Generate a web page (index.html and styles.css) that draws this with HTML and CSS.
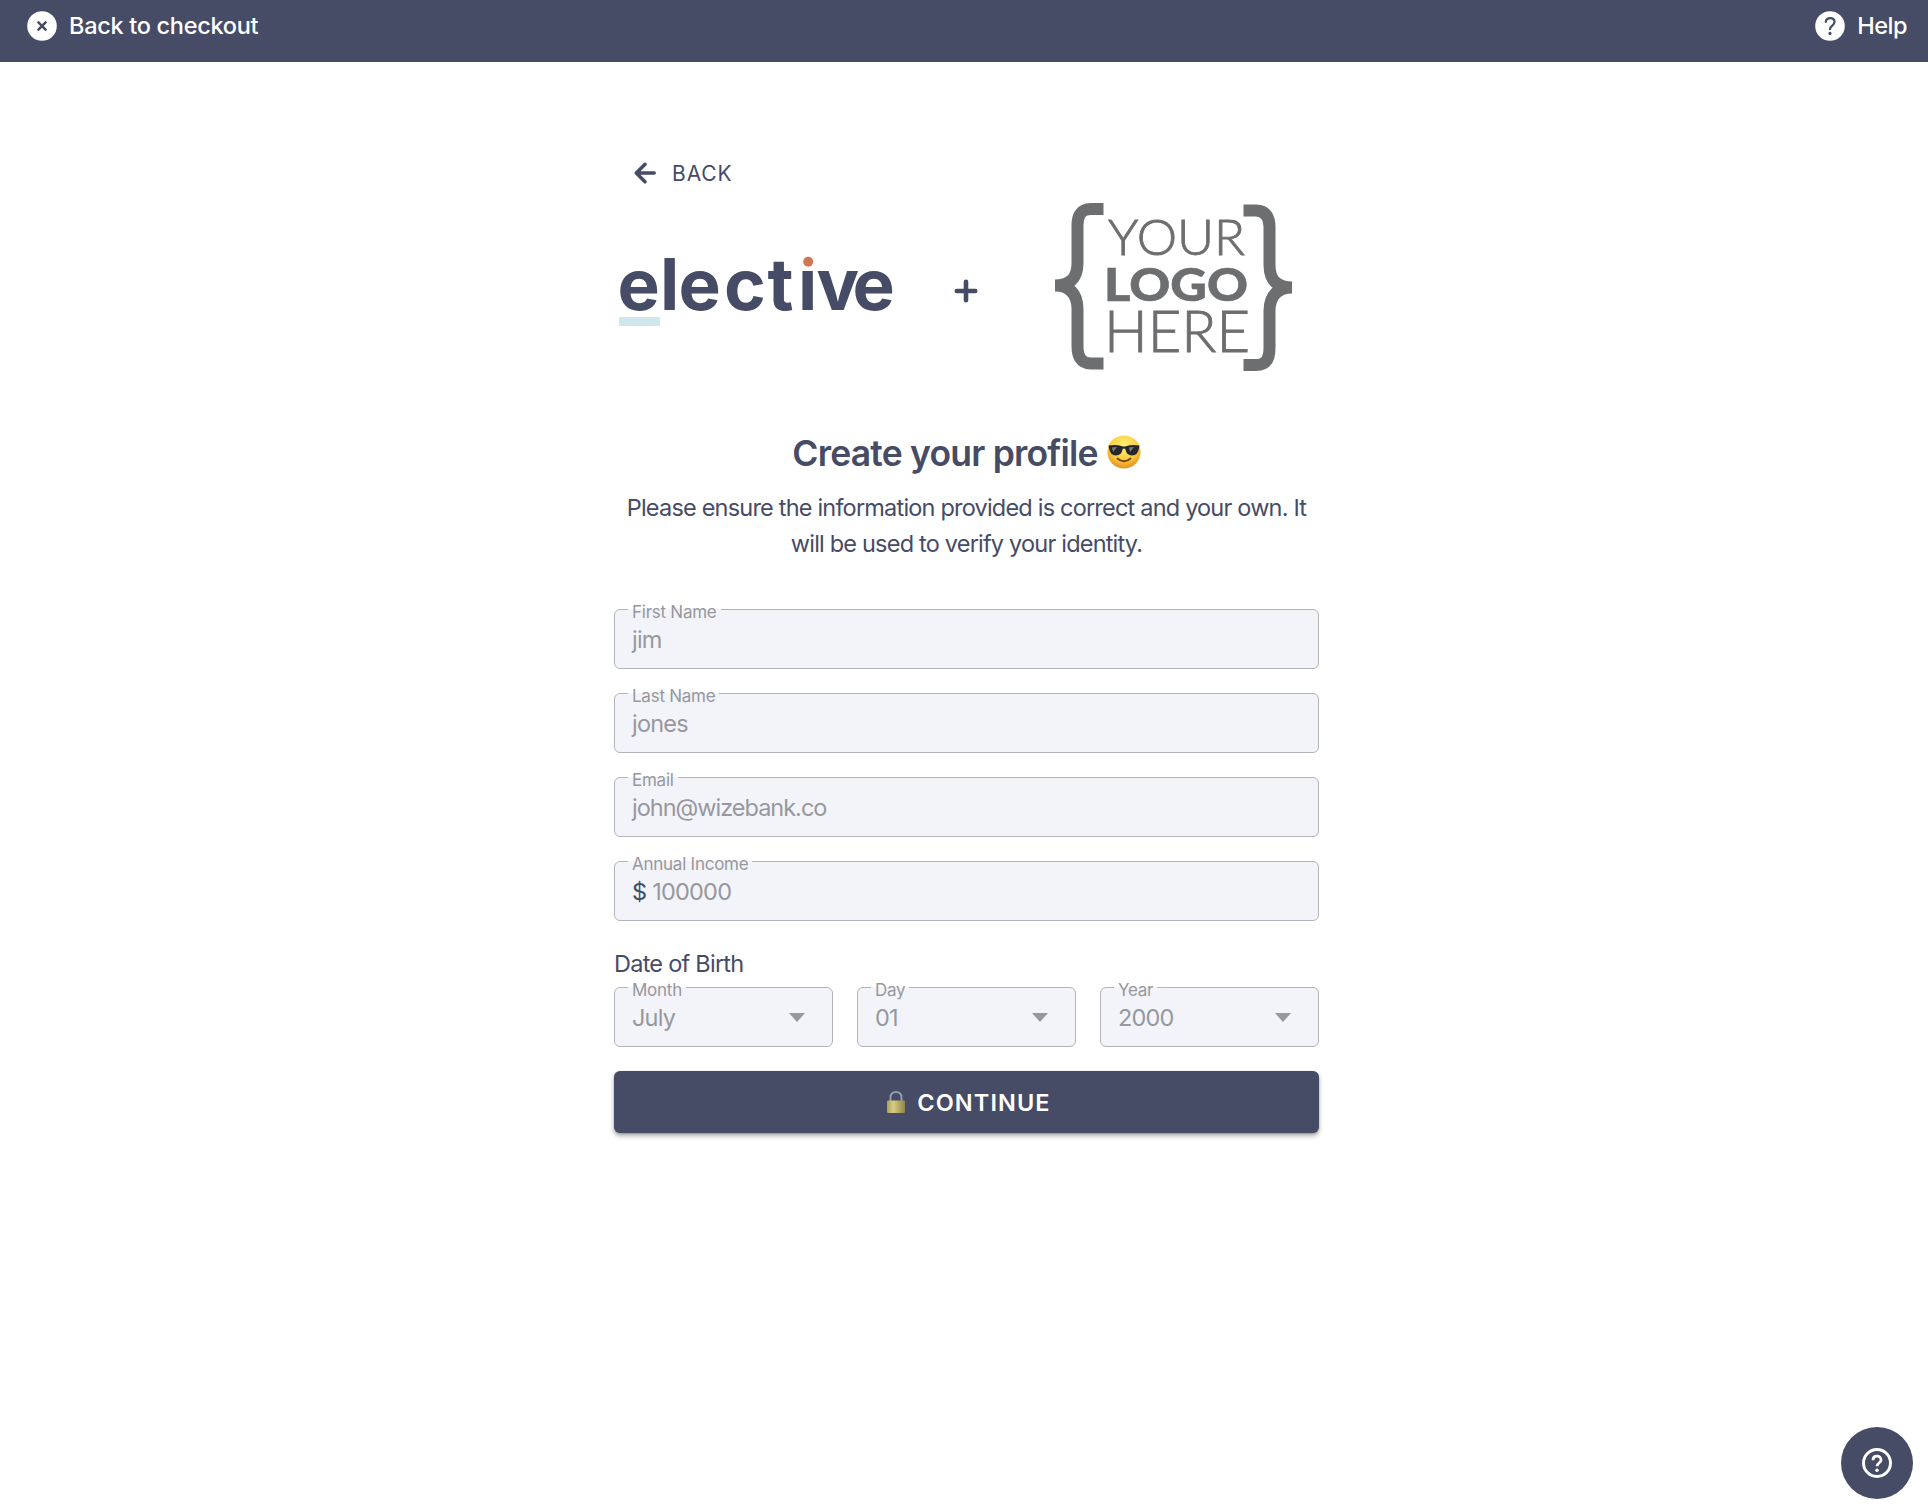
FILE: index.html
```html
<!DOCTYPE html>
<html lang="en">
<head>
<meta charset="utf-8">
<title>Create your profile</title>
<link rel="stylesheet" href="styles.css">
</head>
<body>
<header class="topbar">
  <a class="topbar-link">
    <svg width="30" height="30" viewBox="0 0 30 30"><circle cx="15" cy="15" r="14.8" fill="#fff"/><path d="M11.4 11.4l7.2 7.2M18.600 11.400l-7.200 7.200" stroke="#464b66" stroke-width="2.500" stroke-linecap="round"/></svg>
    <span class="checkout">Back to checkout</span>
  </a>
  <a class="topbar-link">
    <svg width="30" height="30" viewBox="0 0 30 30"><circle cx="15" cy="15" r="14.800" fill="#fff"/><path d="M10.800 10.800C11.100 8.400 12.800 7.100 15.100 7.100c2.500 0 4.400 1.500 4.400 3.800 0 3.600-4.500 3.700-4.500 7.300" fill="none" stroke="#464b66" stroke-width="2.200" stroke-linecap="round"/><circle cx="15" cy="22.400" r="1.600" fill="#464b66"/></svg>
    <span class="help">Help</span>
  </a>
</header>
<main class="column">
  <a class="back">
    <svg width="22" height="22" viewBox="0 0 22 22"><path d="M11 2.300L2.300 11l8.700 8.700M3 11h17.200" fill="none" stroke="#464b66" stroke-width="3.500" stroke-linecap="round" stroke-linejoin="round"/></svg>
    <span>BACK</span>
  </a>
  <div class="logos">
    <svg class="brand" width="284" height="80" viewBox="0 0 284 80">
      <text class="brand-text" y="59" x="3.500 46 64.500 110 153.500 184 202.500 238.500">elective</text>
      <rect x="186" y="0" width="16" height="18" fill="#fff"/>
      <circle cx="194.200" cy="10.800" r="5" fill="#d37550"/>
      <rect x="5" y="66" width="41" height="9" rx="1" fill="#cfe6ea"/>
    </svg>
    <svg class="plus" width="24" height="24" viewBox="0 0 24 24"><path d="M12 2.800v18.400M2.800 12h18.400" stroke="#464b66" stroke-width="4.600" stroke-linecap="round"/></svg>
    <svg class="partner" width="238" height="168" viewBox="0 0 238 168">
      <g fill="none" stroke="#6d6e70" stroke-width="12">
        <path d="M48.500 6H36C25 6 22.500 14 22.500 22V60C22.500 76 14 82.500 0 82.500C14 82.500 22.500 90 22.500 106V143C22.500 152 25 160.500 36 160.500H48.500"/>
        <path d="M188.500 7.500H201C212 7.500 214.500 16 214.500 24V62C214.500 78 223 84.500 237 84.500C223 84.500 214.500 92 214.500 108V145C214.500 154 212 162 201 162H188.500"/>
      </g>
      <text class="light" x="53" y="52" font-size="50" textLength="137" lengthAdjust="spacingAndGlyphs">YOUR</text>
      <text class="heavy" x="49" y="98" font-size="46" textLength="144" lengthAdjust="spacingAndGlyphs">LOGO</text>
      <text class="light" x="49" y="149" font-size="57" textLength="146" lengthAdjust="spacingAndGlyphs">HERE</text>
    </svg>
  </div>
  <h1><span>Create your profile</span>
    <svg width="34" height="34" viewBox="0 0 34 34">
      <defs><radialGradient id="face" cx=".5" cy=".3" r=".72"><stop offset="0" stop-color="#fff27a"/><stop offset=".6" stop-color="#fbcb3c"/><stop offset="1" stop-color="#e28c1d"/></radialGradient></defs>
      <circle cx="17" cy="17" r="16.600" fill="url(#face)"/>
      <path d="M1.500 10.600Q9 9 15 11.200Q17 12 19 11.200Q25 9 32.500 10.600L32 13Q31 20.500 25 20.500Q19.500 20.500 18.300 14Q17 13 15.700 14Q14.500 20.500 9 20.500Q3 20.500 2 13Z" fill="#25272b"/>
      <path d="M5 12.500l5-.5-4 5zM22 12.500l5-.5-4 5z" fill="#777b80"/>
      <path d="M10.500 23.500Q17 29 23.500 23.500" fill="none" stroke="#70400f" stroke-width="1.800" stroke-linecap="round"/>
    </svg>
  </h1>
  <p class="intro"><span>Please ensure the information provided is correct and your own. It</span><br><span>will be used to verify your identity.</span></p>
  <form class="form">
    <div class="field"><label>First Name</label><span>jim</span></div>
    <div class="field"><label>Last Name</label><span>jones</span></div>
    <div class="field"><label>Email</label><span class="email">john@wizebank.co</span></div>
    <div class="field"><label>Annual Income</label><span class="dollar">$</span><span>100000</span></div>
    <div class="dob-title"><span>Date of Birth</span></div>
    <div class="dob">
      <div class="field select"><label>Month</label><span>July</span><i class="caret"></i></div>
      <div class="field select"><label>Day</label><span>01</span><i class="caret"></i></div>
      <div class="field select"><label>Year</label><span>2000</span><i class="caret"></i></div>
    </div>
    <button class="continue" type="button">
      <svg width="20" height="24" viewBox="0 0 20 24">
        <defs><linearGradient id="brass"><stop offset="0" stop-color="#aaa05c"/><stop offset=".35" stop-color="#d6ce83"/><stop offset="1" stop-color="#8f8648"/></linearGradient></defs>
        <path d="M4.500 12V7.500Q4.500 2 10 2T15.500 7.500V12" fill="none" stroke="#8d9bac" stroke-width="2"/>
        <rect x="1" y="10.500" width="18" height="12.500" rx="1" fill="url(#brass)"/>
      </svg>
      <span>CONTINUE</span>
    </button>
  </form>
</main>
<a class="fab">
  <svg width="32" height="32" viewBox="0 0 32 32"><circle cx="16" cy="16" r="13.500" fill="none" stroke="#fff" stroke-width="3"/><path d="M12 13.200c0-2.500 1.700-4 4-4s4 1.500 4 3.700c0 2.900-4 3.300-4 6.300" fill="none" stroke="#fff" stroke-width="2.800"/><circle cx="16" cy="23.300" r="1.700" fill="#fff"/></svg>
</a>
</body>
</html>
```
FILE: styles.css
```css
* { box-sizing: border-box; }
body { margin: 0; min-height: 1510px; background: #fff; color: #464b66; font-family: Inter, sans-serif; font-size: 23.5px; }
svg { display: block; flex: none; }
span { white-space: nowrap; }

.topbar { height: 62px; padding: 11px 21px 0 27px; background: #464b66; color: #fff; display: flex; justify-content: space-between; align-items: flex-start; font-weight: 500; }
.topbar-link { display: flex; gap: 12px; height: 30px; line-height: 30px; }
.checkout { letter-spacing: -.3px; }
.help { letter-spacing: -.5px; }

.column { width: 705px; margin: 0 0 0 614px; }
.back { display: flex; align-items: center; gap: 16px; height: 30px; margin-top: 96px; padding-left: 20px; font-size: 21px; font-weight: 370; letter-spacing: .9px; }
.back svg { margin-top: -1px; }
.logos { display: flex; align-items: flex-start; height: 168px; margin-top: 15px; }
.brand { margin-top: 48px; overflow: visible; }
.plus { margin: 76px 0 0 56px; }
.partner { margin-left: 77px; }
.brand-text { font: 700 71px Inter, sans-serif; fill: #464b66; }
.light { font-family: Lato, sans-serif; font-weight: 300; fill: #6d6e70; stroke: #6d6e70; stroke-width: .9px; }
.heavy { font-family: Lato, sans-serif; font-weight: 900; fill: #6d6e70; stroke: #6d6e70; stroke-width: .6px; }

h1 { display: flex; justify-content: center; align-items: center; gap: 9px; height: 44px; margin: 61px 0 0; font-size: 35.5px; font-weight: 600; line-height: 44px; letter-spacing: -.8px; }
h1 svg { margin-top: -5px; }
.intro { margin: 14px 0 0; text-align: center; line-height: 36px; letter-spacing: -.8px; font-weight: 380; }

.form { margin-top: 47px; display: flex; flex-direction: column; gap: 24px; }
.field { position: relative; height: 60px; border: 1.5px solid #b3b4bb; border-radius: 6px; background: #f3f4fa; color: #97989d; padding: 0 17px; display: flex; align-items: center; letter-spacing: -.8px; font-weight: 370; }
.field label { position: absolute; left: 13px; top: -8px; height: 20px; line-height: 20px; padding: 0 4px; font-size: 17px; letter-spacing: -.25px; white-space: nowrap; background: linear-gradient(#fff 0 7px, #f3f4fa 7px); }
.email { letter-spacing: -1px; }
.dollar { color: #464b66; margin-right: 6px; }
.dob-title { height: 30px; line-height: 30px; margin-top: 4px; letter-spacing: -.75px; font-weight: 380; }
.dob { display: grid; grid-template-columns: repeat(3, 1fr); gap: 24px; margin-top: -16px; }
.select { justify-content: space-between; }
.caret { width: 0; height: 0; margin: 1px 10px 0 0; border: 8px solid transparent; border-top: 9px solid #97989d; border-bottom: 0; }
.continue { height: 62px; border: 0; border-radius: 6px; background: #464b66; color: #fff; font: 600 23.5px Inter, sans-serif; letter-spacing: 1.1px; padding: 0 0 0 4px; display: flex; justify-content: center; align-items: center; gap: 11px; box-shadow: 0 3px 5px rgba(0,0,0,.3), 0 1px 2px rgba(0,0,0,.2); }
.fab { position: fixed; left: 1841px; top: 1427px; width: 72px; height: 72px; border-radius: 50%; background: #464b66; display: flex; align-items: center; justify-content: center; }
```
